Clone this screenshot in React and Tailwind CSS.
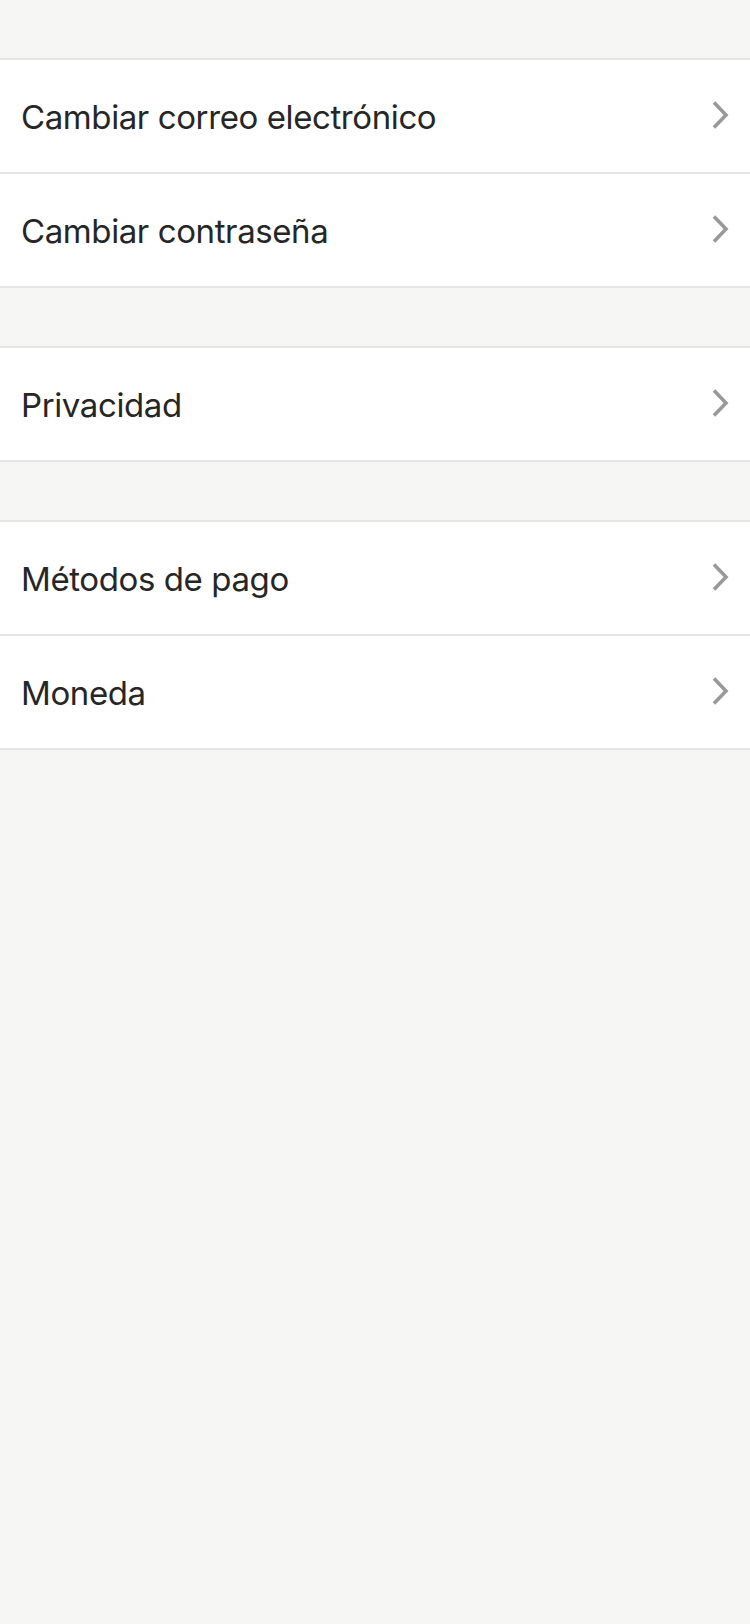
const groups = [
  ['Cambiar correo electrónico', 'Cambiar contraseña'],
  ['Privacidad'],
  ['Métodos de pago', 'Moneda'],
]

function Chevron() {
  return (
    <svg width="18" height="30" viewBox="0 0 18 30" fill="none" className="shrink-0 -translate-y-[3px]">
      <path d="M3 2.5 L15 15 L3 27.5" stroke="#999999" strokeWidth="3.6" strokeLinecap="butt" strokeLinejoin="miter" />
    </svg>
  )
}

export default function App() {
  return (
    <div className="min-h-[1624px] bg-[#f6f6f4] pt-[58px] flex flex-col gap-[58px]" style={{ fontFamily: 'Inter, "Noto Sans", sans-serif' }}>
      {groups.map((items, g) => (
        <div key={g} className="bg-white border-y-2 border-[#e6e6e6]">
          {items.map((label, i) => (
            <div
              key={label}
              className={`h-[112px] flex items-center justify-between pl-[21px] pr-[21px] pt-[4px] ${i > 0 ? 'border-t-2 border-[#e6e6e6] h-[114px]' : ''}`}
            >
              <span className="text-[33px] text-[#262626] tracking-[-0.4px]">{label}</span>
              <Chevron />
            </div>
          ))}
        </div>
      ))}
    </div>
  )
}
